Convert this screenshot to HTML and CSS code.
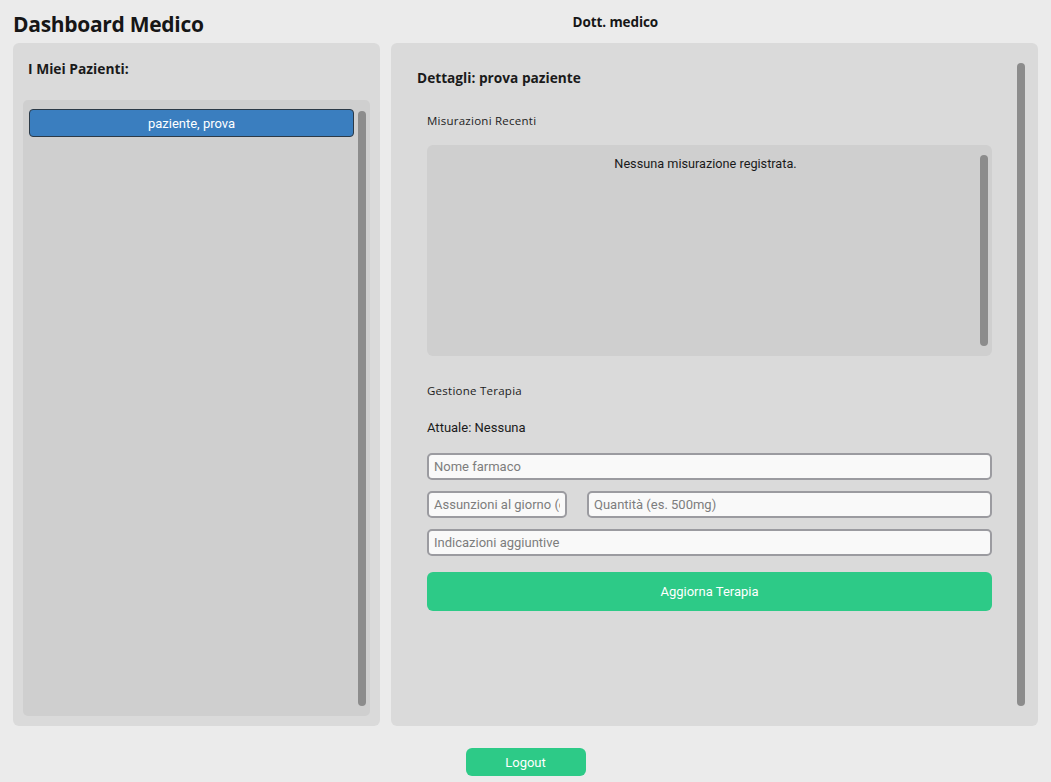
FILE: index.html
```html
<!DOCTYPE html>
<html lang="it">
<head>
<meta charset="utf-8">
<title>Dashboard Medico</title>
<link rel="stylesheet" href="styles.css">
</head>
<body>
<div class="app">
  <header class="topbar">
    <h1 class="title">Dashboard Medico</h1>
    <div class="doctor">Dott. medico</div>
  </header>
  <main class="main">
    <section class="panel panel-left">
      <h2 class="panel-title">I Miei Pazienti:</h2>
      <div class="list">
        <div class="list-items">
          <div class="list-item selected">paziente, prova</div>
        </div>
        <div class="scrollbar list-scroll"></div>
      </div>
    </section>
    <section class="panel panel-right">
      <div class="details">
        <h2 class="details-title">Dettagli: prova paziente</h2>
        <div class="section">
          <div class="section-label label-measure">Misurazioni Recenti</div>
          <div class="measure-box">
            <div class="measure-text">Nessuna misurazione registrata.</div>
            <div class="scrollbar measure-scroll"></div>
          </div>
          <div class="section-label label-therapy">Gestione Terapia</div>
          <div class="current">Attuale: Nessuna</div>
          <div class="form">
            <input class="field" type="text" placeholder="Nome farmaco">
            <div class="row">
              <input class="field field-small" type="text" placeholder="Assunzioni al giorno (es. 2)">
              <input class="field field-grow" type="text" placeholder="Quantità (es. 500mg)">
            </div>
            <input class="field" type="text" placeholder="Indicazioni aggiuntive">
            <button class="btn btn-update" type="button">Aggiorna Terapia</button>
          </div>
        </div>
      </div>
      <div class="scrollbar details-scroll"></div>
    </section>
  </main>
  <footer class="footer">
    <button class="btn btn-logout" type="button">Logout</button>
  </footer>
</div>
</body>
</html>
```

FILE: styles.css
```css
* { box-sizing: border-box; }
html, body { margin: 0; padding: 0; }
body {
  background: #ebebeb;
  font-family: Roboto, "Liberation Sans", sans-serif;
  color: #1a1a1a;
  width: 1051px;
  height: 782px;
  overflow: hidden;
}
.app { display: flex; flex-direction: column; }

.topbar {
  display: flex;
  align-items: center;
  height: 43px;
  padding-left: 13px;
}
.title {
  margin: 0;
  font-family: "Open Sans", sans-serif;
  font-weight: 700;
  font-size: 21px;
  line-height: 28px;
  letter-spacing: -0.3px;
  padding-top: 4px;
  color: #161616;
}
.doctor {
  flex: 1;
  text-align: center;
  padding-right: 24px;
  font-family: "Open Sans", sans-serif;
  font-weight: 700;
  font-size: 13.5px;
  letter-spacing: -0.1px;
  color: #161616;
}

.main {
  display: flex;
  gap: 11px;
  padding: 0 13px;
  height: 683px;
}
.panel {
  background: #dadada;
  border-radius: 6px;
}
.panel-left {
  width: 367px;
  padding: 10px;
  display: flex;
  flex-direction: column;
}
.panel-title {
  margin: 6px 0 0 5px;
  font-family: "Open Sans", sans-serif;
  font-weight: 700;
  font-size: 13.8px;
  line-height: 20px;
  letter-spacing: 0;
  height: 41px;
}
.list {
  flex: 1;
  background: #cfcfcf;
  border-radius: 5px;
  display: flex;
  padding: 9px 4px 10px 6px;
}
.list-items { flex: 1; margin-right: 4px; }
.list-item {
  height: 28px;
  border-radius: 4px;
  display: flex;
  align-items: center;
  justify-content: center;
  font-size: 13px;
  color: #fff;
}
.list-item.selected {
  background: #3a7ebf;
  border: 1px solid #2c3a47;
}
.scrollbar {
  width: 8px;
  background: #8c8c8c;
  border-radius: 4px;
}
.list-scroll { margin-top: 2px; }

.panel-right {
  flex: 1;
  display: flex;
  padding: 20px 13px 20px 26px;
}
.details { flex: 1; }
.details-title {
  margin: 5px 0 0 0;
  font-family: "Open Sans", sans-serif;
  font-weight: 700;
  font-size: 13.7px;
  line-height: 20px;
  letter-spacing: 0;
}
.section {
  padding-left: 10px;
  margin-right: 25px;
}
.section-label {
  font-family: "Open Sans", sans-serif;
  font-size: 11.5px;
  line-height: 14px;
  letter-spacing: 0.25px;
  color: #1c1c1c;
}
.label-measure { margin-top: 26px; }
.measure-box {
  margin-top: 17px;
  height: 211px;
  background: #cfcfcf;
  border-radius: 6px;
  display: flex;
  padding: 10px 4px 10px 0;
}
.measure-text {
  flex: 1;
  text-align: center;
  font-size: 12.7px;
  line-height: 16px;
  margin-top: 1px;
  padding-left: 4px;
  color: #1a1a1a;
}
.label-therapy { margin-top: 28px; }
.current {
  margin-top: 22px;
  font-size: 13px;
  line-height: 16px;
}
.form {
  margin-top: 17px;
  display: flex;
  flex-direction: column;
  gap: 11px;
}
.row { display: flex; gap: 20px; }
.field {
  height: 27px;
  width: 100%;
  background: #f9f9f9;
  border: 2px solid #9b9ba0;
  border-radius: 5px;
  padding: 0 5px;
  font-family: Roboto, sans-serif;
  font-size: 13px;
  color: #222;
  outline: none;
}
.field::placeholder { color: #7d7d7d; }
.field-small { width: 140px; flex: none; }
.field-grow { flex: 1; width: auto; }
.btn {
  border: none;
  background: #2dca87;
  color: #fff;
  font-family: Roboto, sans-serif;
  font-size: 13px;
  border-radius: 6px;
  cursor: pointer;
}
.btn-update {
  height: 39px;
  width: 100%;
  margin-top: 5px;
}
.details-scroll { align-self: stretch; }

.footer {
  display: flex;
  justify-content: center;
  padding-top: 22px;
}
.btn-logout {
  width: 120px;
  height: 28px;
}
```
